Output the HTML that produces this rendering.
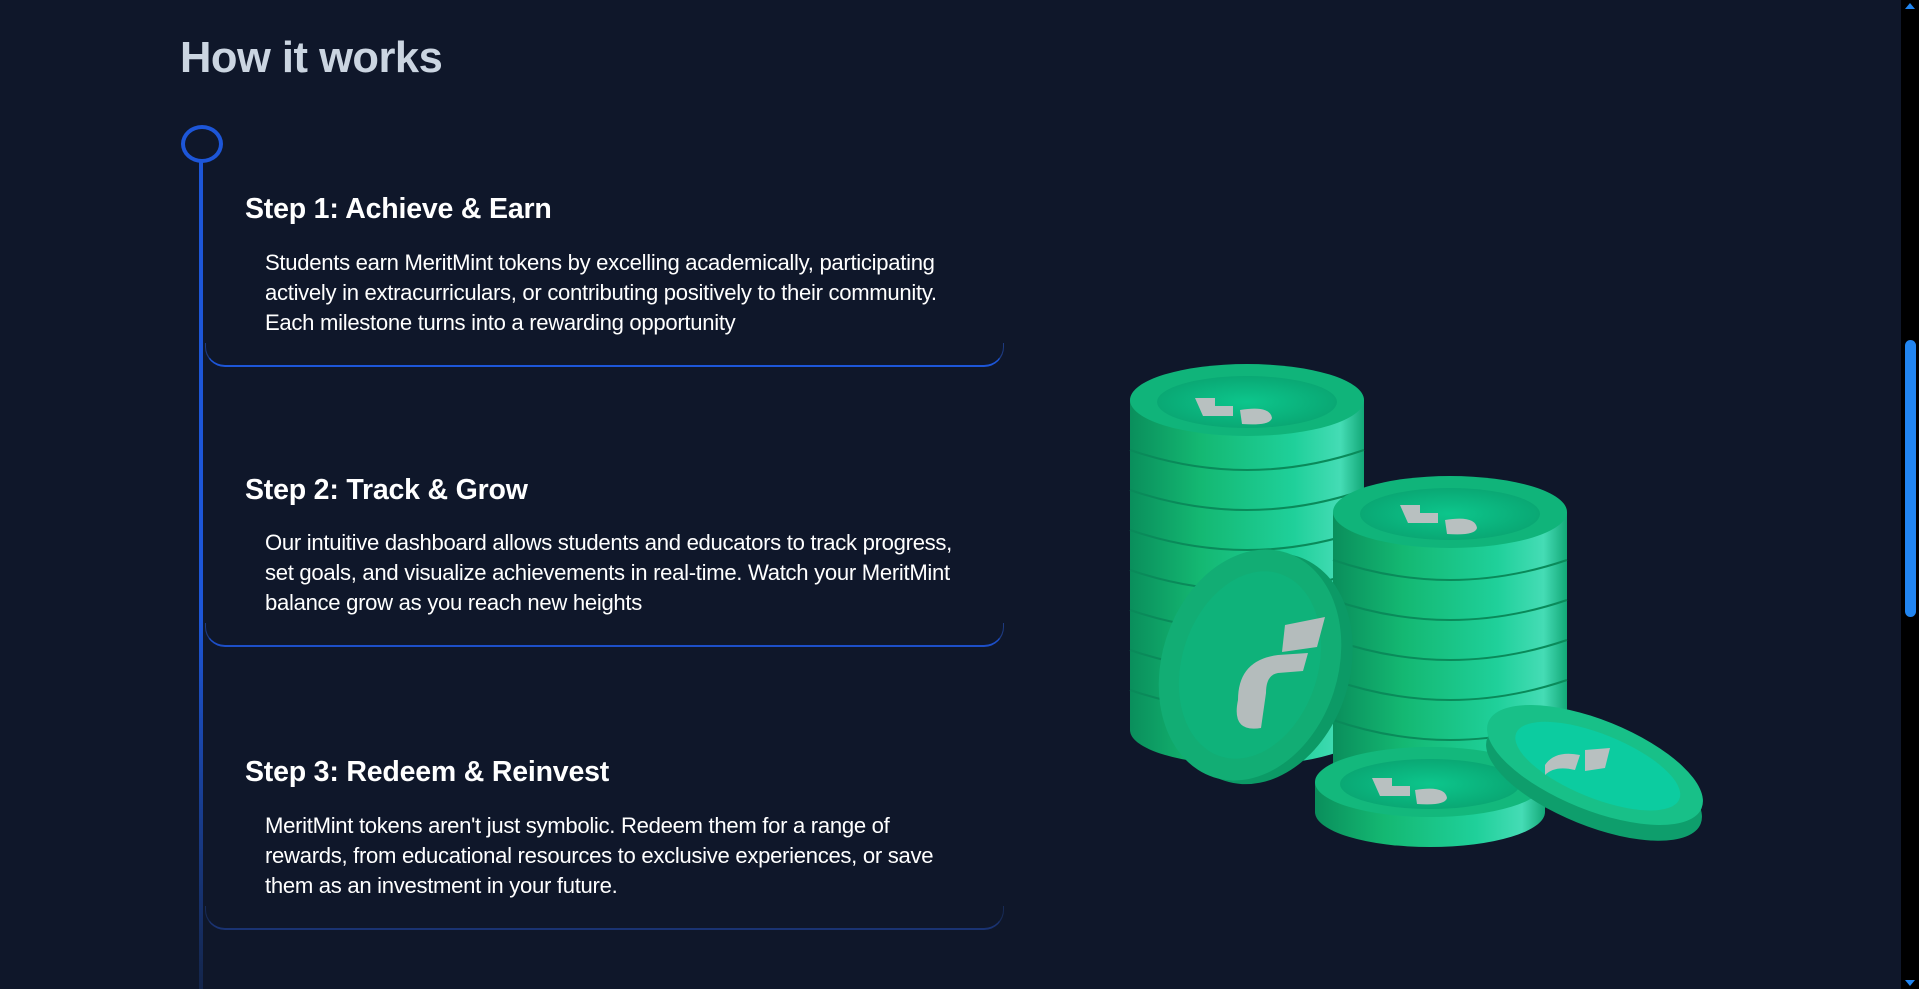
<!DOCTYPE html>
<html><head><meta charset="utf-8"><style>
html,body{margin:0;padding:0;width:1919px;height:989px;overflow:hidden;background:#0f172a;font-family:"Liberation Sans",sans-serif;}
.sb{position:absolute;right:0;top:0;width:18px;height:989px;background:#000;}
.thumb{position:absolute;left:4px;top:340px;width:11px;height:277px;background:#2185f0;border-radius:6px;}
.up{position:absolute;left:4px;top:3px;width:0;height:0;border-left:5px solid transparent;border-right:5px solid transparent;border-bottom:6px solid #2185f0;}
.dn{position:absolute;left:4px;bottom:3px;width:0;height:0;border-left:5px solid transparent;border-right:5px solid transparent;border-top:6px solid #2185f0;}
h1{position:absolute;left:180px;top:34px;margin:0;font-size:43.5px;font-weight:bold;color:#cbd5e1;letter-spacing:-0.5px;}
.circ{position:absolute;left:181px;top:125px;border:4px solid #1d56d8;border-radius:50%;box-sizing:border-box;width:42px;height:38px}
.line{position:absolute;left:199px;top:162px;width:4px;height:827px;background:linear-gradient(#1d56d8 0%,#1d56d8 55%,#14254a 100%);}
.card{position:absolute;left:205px;width:797px;height:22px;border-bottom:2px solid #1d56d8;border-left:1px solid #1d3a80;border-right:1px solid #1d3a80;border-radius:0 0 20px 20px;border-top:none}
.t{position:absolute;left:245px;margin:0;font-size:28.5px;font-weight:bold;color:#fff;letter-spacing:-0.2px}
.b{position:absolute;left:265px;width:710px;margin:0;font-size:22.1px;line-height:30px;color:#fff;letter-spacing:-0.3px}
</style></head><body>
<h1>How it works</h1>
<div class="circ"></div>
<div class="line"></div>

<div class="card" style="top:343px"></div>
<div class="t" style="top:193px">Step 1: Achieve &amp; Earn</div>
<p class="b" style="top:248px">Students earn MeritMint tokens by excelling academically, participating actively in extracurriculars, or contributing positively to their community. Each milestone turns into a rewarding opportunity</p>

<div class="card" style="top:623px;border-bottom-color:#1d4fc8"></div>
<div class="t" style="top:474px">Step 2: Track &amp; Grow</div>
<p class="b" style="top:528px">Our intuitive dashboard allows students and educators to track progress, set goals, and visualize achievements in real-time. Watch your MeritMint balance grow as you reach new heights</p>

<div class="card" style="top:906px;border-bottom-color:#1a3372;border-left-color:#172a55;border-right-color:#172a55"></div>
<div class="t" style="top:756px">Step 3: Redeem &amp; Reinvest</div>
<p class="b" style="top:811px">MeritMint tokens aren't just symbolic. Redeem them for a range of rewards, from educational resources to exclusive experiences, or save them as an investment in your future.</p>

<svg style="position:absolute;left:0;top:0" width="1919" height="989">
<defs>
<linearGradient id="side" x1="0" x2="1">
<stop offset="0" stop-color="#0a8f5c"/><stop offset="0.3" stop-color="#14b872"/><stop offset="0.7" stop-color="#1fd09a"/><stop offset="0.9" stop-color="#45dcb5"/><stop offset="1" stop-color="#13a877"/></linearGradient>
<radialGradient id="face"><stop offset="0" stop-color="#0cc68c"/><stop offset="1" stop-color="#0aa874"/></radialGradient>
</defs>
<rect x="1130" y="400" width="234" height="330" fill="url(#side)"/>
<ellipse cx="1247" cy="730" rx="117" ry="35" fill="url(#side)"/>
<g stroke="#0a8a5a" stroke-width="2" fill="none">
<path d="M1130 450 Q1247 490 1364 450"/><path d="M1130 490 Q1247 530 1364 490"/><path d="M1130 530 Q1247 570 1364 530"/><path d="M1130 570 Q1247 610 1364 570"/><path d="M1130 610 Q1247 650 1364 610"/><path d="M1130 650 Q1247 690 1364 650"/><path d="M1130 690 Q1247 730 1364 690"/>
</g>
<ellipse cx="1247" cy="400" rx="117" ry="36" fill="#10b47a"/>
<ellipse cx="1247" cy="402" rx="90" ry="26" fill="url(#face)"/>
<rect x="1333" y="512" width="234" height="275" fill="url(#side)"/>
<ellipse cx="1450" cy="787" rx="117" ry="35" fill="url(#side)"/>
<g stroke="#0a8a5a" stroke-width="2" fill="none">
<path d="M1333 560 Q1450 600 1567 560"/><path d="M1333 600 Q1450 640 1567 600"/><path d="M1333 640 Q1450 680 1567 640"/><path d="M1333 680 Q1450 720 1567 680"/><path d="M1333 720 Q1450 760 1567 720"/>
</g>
<ellipse cx="1450" cy="512" rx="117" ry="36" fill="#10b47a"/>
<ellipse cx="1450" cy="514" rx="90" ry="26" fill="url(#face)"/>
<g transform="rotate(18 1250 665)">
<ellipse cx="1262" cy="665" rx="88" ry="118" fill="#0c9a66"/>
<ellipse cx="1250" cy="665" rx="88" ry="118" fill="#12ad74"/>
<ellipse cx="1250" cy="665" rx="68" ry="96" fill="#0fb27a"/>
</g>
<path d="M1238 700 q0-40 40-45 l30-2 l-5 18 l-25 2 q-12 2-12 20 l-5 35 q-30 5-23-28z" fill="#b4bcbc"/>
<path d="M1285 625 l40-8 l-8 30 l-35 5z" fill="#b4bcbc"/>
<rect x="1315" y="782" width="230" height="30" fill="url(#side)"/>
<ellipse cx="1430" cy="812" rx="115" ry="35" fill="url(#side)"/>
<ellipse cx="1430" cy="782" rx="115" ry="35" fill="#13b87c"/>
<ellipse cx="1430" cy="784" rx="90" ry="25" fill="url(#face)"/>
<g transform="rotate(22 1595 765)">
<ellipse cx="1600" cy="780" rx="115" ry="45" fill="#0e9e6c"/>
<ellipse cx="1595" cy="765" rx="115" ry="45" fill="#18c088"/>
<ellipse cx="1598" cy="765" rx="88" ry="32" fill="#0ccca0"/>
</g>
<g fill="#b8c0c0">
<path d="M1195 398 h20 v8 h18 v10 h-30 z"/><path d="M1240 410 q30-5 32 8 q-2 8-30 6z"/>
<path d="M1400 505 h20 v8 h18 v10 h-30 z"/><path d="M1445 520 q30-5 32 8 q-2 8-30 6z"/>
<path d="M1372 778 h20 v8 h18 v10 h-30 z"/><path d="M1415 790 q30-5 32 8 q-2 8-30 6z"/>
<path d="M1545 765 q10-15 35-10 l-5 15 q-20 -5-30 5z"/><path d="M1585 750 l25 -2 l-5 20 l-20 3z"/>
</g>
</svg>

<div class="sb"><div class="up"></div><div class="thumb"></div><div class="dn"></div></div>
</body></html>
